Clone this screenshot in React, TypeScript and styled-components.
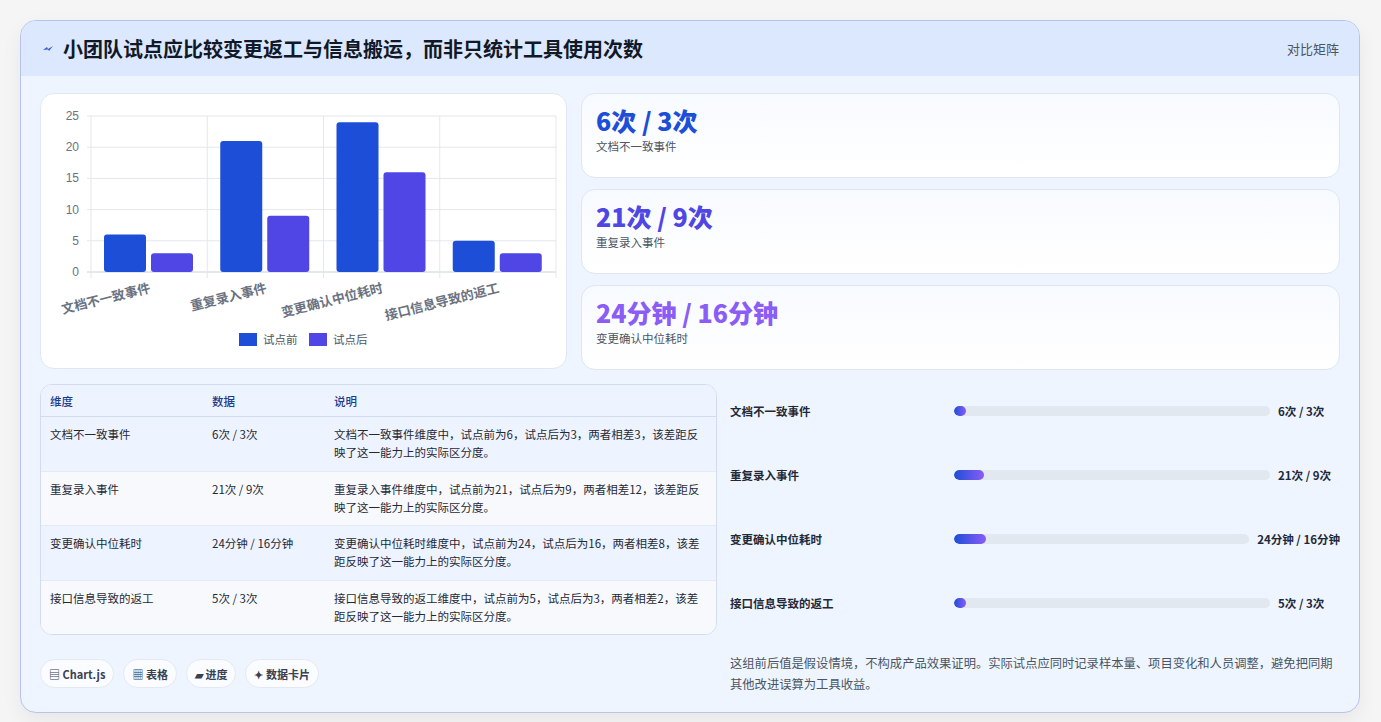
import styled, { createGlobalStyle } from 'styled-components';

const Global = createGlobalStyle`
  html, body { margin: 0; background: #f5f5f6; }
  body { font-family: "Noto Sans CJK SC", "Noto Sans", sans-serif; color: #1f2937; }
  * { box-sizing: border-box; }
`;

const Page = styled.div`
  padding: 20px 21px 22px 20px;
`;

const Panel = styled.section`
  border: 1px solid #b9c2ee;
  border-radius: 16px;
  background: #eef5ff;
  overflow: hidden;
  box-shadow: 0 8px 20px rgba(0, 0, 0, 0.06);
`;

const Header = styled.header`
  height: 55px;
  background: #dce8fd;
  display: flex;
  align-items: center;
  padding: 0 20px;
  gap: 8px;
`;

const Title = styled.h1`
  margin: 0;
  font-size: 20px;
  font-weight: 700;
  color: #111827;
  flex: 1;
`;

const Tag = styled.span`
  font-size: 13px;
  color: #4b5563;
`;

const Body = styled.div`
  padding: 17px 19px 17px 19px;
  display: flex;
  flex-direction: column;
  gap: 14px;
`;

const TopRow = styled.div`
  display: grid;
  grid-template-columns: 527px 1fr;
  gap: 14px;
`;

const ChartCard = styled.div`
  background: #fff;
  border: 1px solid #e0e7f5;
  border-radius: 14px;
  height: 276px;
`;

const Stats = styled.div`
  display: flex;
  flex-direction: column;
  gap: 11px;
`;

const StatCard = styled.div`
  height: 85px;
  background: linear-gradient(180deg, #f7faff, #fff);
  border: 1px solid #dde5f6;
  border-radius: 14px;
  padding: 9px 14px;
`;

const StatValue = styled.div<{ $c: string }>`
  font-size: 25px;
  font-weight: 800;
  color: ${(p) => p.$c};
  line-height: 34px;
`;

const StatLabel = styled.div`
  font-size: 11.5px;
  color: #4b5563;
  margin-top: 1px;
`;

const BottomRow = styled.div`
  display: grid;
  grid-template-columns: 677px 1fr;
  gap: 13px;
`;

const Table = styled.table`
  width: 100%;
  border-collapse: separate;
  border-spacing: 0;
  border: 1px solid #d3dcef;
  border-radius: 12px;
  overflow: hidden;
  font-size: 11.5px;
  background: #fff;
`;

const Th = styled.th`
  text-align: left;
  font-weight: 500;
  color: #1e3a8a;
  background: #eef4ff;
  padding: 0 9px;
  height: 32px;
  border-bottom: 1px solid #d3dcef;
`;

const Tr = styled.tr<{ $alt: boolean }>`
  background: ${(p) => (p.$alt ? '#f7f9fd' : '#eef4ff')};
`;

const Td = styled.td<{ $last?: boolean }>`
  padding: 8px 12px 8px 9px;
  vertical-align: top;
  color: #1f2937;
  line-height: 18px;
  border-bottom: ${(p) => (p.$last ? 'none' : '1px solid #e4eaf5')};
`;

const Right = styled.div`
  display: flex;
  flex-direction: column;
  margin-top: -5px;
`;

const ProgressRow = styled.div`
  height: 64px;
  display: flex;
  align-items: center;
  gap: 8px;
  font-size: 11.5px;
  font-weight: 600;
`;

const PLabel = styled.span`
  width: 216px;
  color: #1f2937;
`;

const Track = styled.div`
  flex: 1;
  height: 10px;
  border-radius: 5px;
  background: #e2e8f0;
  overflow: hidden;
`;

const Fill = styled.div`
  height: 100%;
  border-radius: 5px;
  background: linear-gradient(90deg, #1d4ed8, #8b5cf6);
`;

const PValue = styled.span`
  min-width: 62px;
  color: #1f2937;
  font-weight: 700;
`;

const FooterRow = styled.div`
  display: grid;
  grid-template-columns: 677px 1fr;
  gap: 13px;
  align-items: start;
`;

const Chips = styled.div`
  display: flex;
  gap: 9px;
  padding-top: 10px;
`;

const Chip = styled.span`
  height: 29px;
  padding: 0 8px;
  border-radius: 15px;
  background: #fbfcff;
  border: 1px solid #e3e8f2;
  font-size: 11px;
  font-weight: 700;
  color: #374151;
  display: inline-flex;
  align-items: center;
  gap: 4px;
`;

const Note = styled.p`
  margin: 4px 0 0;
  font-size: 12.3px;
  line-height: 21px;
  color: #4b5563;
`;

const data = [
  { name: '文档不一致事件', a: 6, b: 3, v: '6次 / 3次', fill: 12 },
  { name: '重复录入事件', a: 21, b: 9, v: '21次 / 9次', fill: 30 },
  { name: '变更确认中位耗时', a: 24, b: 16, v: '24分钟 / 16分钟', fill: 32 },
  { name: '接口信息导致的返工', a: 5, b: 3, v: '5次 / 3次', fill: 12 },
];

const notes = [
  '文档不一致事件维度中，试点前为6，试点后为3，两者相差3，该差距反映了这一能力上的实际区分度。',
  '重复录入事件维度中，试点前为21，试点后为9，两者相差12，该差距反映了这一能力上的实际区分度。',
  '变更确认中位耗时维度中，试点前为24，试点后为16，两者相差8，该差距反映了这一能力上的实际区分度。',
  '接口信息导致的返工维度中，试点前为5，试点后为3，两者相差2，该差距反映了这一能力上的实际区分度。',
];

function Chart() {
  const x0 = 50, x1 = 515, yTop = 22, y0 = 178;
  const ppu = (y0 - yTop) / 25;
  const cw = (x1 - x0) / 4;
  return (
    <svg width="527" height="276" style={{ display: 'block' }}>
      {[0, 5, 10, 15, 20, 25].map((t) => (
        <g key={t}>
          <line x1={x0 - 4} x2={x1} y1={y0 - t * ppu} y2={y0 - t * ppu} stroke={t === 0 ? '#cbd2dc' : '#e5e7eb'} />
          <text x={x0 - 12} y={y0 - t * ppu + 4} fontSize="12" fill="#6b7280" textAnchor="end" fontFamily="Liberation Sans, sans-serif">{t}</text>
        </g>
      ))}
      {[0, 1, 2, 3, 4].map((i) => (
        <line key={i} x1={x0 + i * cw} x2={x0 + i * cw} y1={yTop} y2={y0 + 6} stroke="#e5e7eb" />
      ))}
      {data.map((d, i) => {
        const cx = x0 + i * cw;
        const lx = cx + cw / 2 + 2;
        return (
          <g key={d.name}>
            <rect x={cx + 13} y={y0 - d.a * ppu} width="42" height={d.a * ppu} rx="3" fill="#1d4ed8" />
            <rect x={cx + 60} y={y0 - d.b * ppu} width="42" height={d.b * ppu} rx="3" fill="#4f46e5" />
            <text
              x={lx}
              y={y0 + 20}
              fontSize="13"
              fontWeight="700"
              fill="#6b7280"
              textAnchor="end"
              transform={`rotate(-14 ${lx} ${y0 + 20})`}
            >
              {d.name}
            </text>
          </g>
        );
      })}
      <rect x="198" y="239" width="18" height="13" fill="#1d4ed8" />
      <text x="222" y="250" fontSize="11.5" fill="#4b5563">试点前</text>
      <rect x="268" y="239" width="18" height="13" fill="#4f46e5" />
      <text x="292" y="250" fontSize="11.5" fill="#4b5563">试点后</text>
    </svg>
  );
}

const Bolt = () => (
  <svg width="14" height="14" viewBox="0 0 14 14">
    <path d="M2 8 L6 5 L7 7 L12 4 L8 9 L7 7.5 Z" fill="#3b5bdb" />
  </svg>
);

export default function App() {
  return (
    <Page>
      <Global />
      <Panel>
        <Header>
          <Bolt />
          <Title>小团队试点应比较变更返工与信息搬运，而非只统计工具使用次数</Title>
          <Tag>对比矩阵</Tag>
        </Header>
        <Body>
          <TopRow>
            <ChartCard>
              <Chart />
            </ChartCard>
            <Stats>
              <StatCard>
                <StatValue $c="#1d4ed8">6次 / 3次</StatValue>
                <StatLabel>文档不一致事件</StatLabel>
              </StatCard>
              <StatCard>
                <StatValue $c="#4f46e5">21次 / 9次</StatValue>
                <StatLabel>重复录入事件</StatLabel>
              </StatCard>
              <StatCard>
                <StatValue $c="#8b5cf6">24分钟 / 16分钟</StatValue>
                <StatLabel>变更确认中位耗时</StatLabel>
              </StatCard>
            </Stats>
          </TopRow>
          <BottomRow>
            <Table>
              <thead>
                <tr>
                  <Th style={{ width: 162 }}>维度</Th>
                  <Th style={{ width: 122 }}>数据</Th>
                  <Th>说明</Th>
                </tr>
              </thead>
              <tbody>
                {data.map((d, i) => (
                  <Tr key={d.name} $alt={i % 2 === 1}>
                    <Td $last={i === 3}>{d.name}</Td>
                    <Td $last={i === 3}>{d.v}</Td>
                    <Td $last={i === 3}>{notes[i]}</Td>
                  </Tr>
                ))}
              </tbody>
            </Table>
            <Right>
              {data.map((d) => (
                <ProgressRow key={d.name}>
                  <PLabel>{d.name}</PLabel>
                  <Track>
                    <Fill style={{ width: d.fill }} />
                  </Track>
                  <PValue>{d.v}</PValue>
                </ProgressRow>
              ))}
            </Right>
          </BottomRow>
          <FooterRow>
            <Chips>
              <Chip>▤ Chart.js</Chip>
              <Chip>▦ 表格</Chip>
              <Chip>▰ 进度</Chip>
              <Chip>✦ 数据卡片</Chip>
            </Chips>
            <Note>
              这组前后值是假设情境，不构成产品效果证明。实际试点应同时记录样本量、项目变化和人员调整，避免把同期其他改进误算为工具收益。
            </Note>
          </FooterRow>
        </Body>
      </Panel>
    </Page>
  );
}
